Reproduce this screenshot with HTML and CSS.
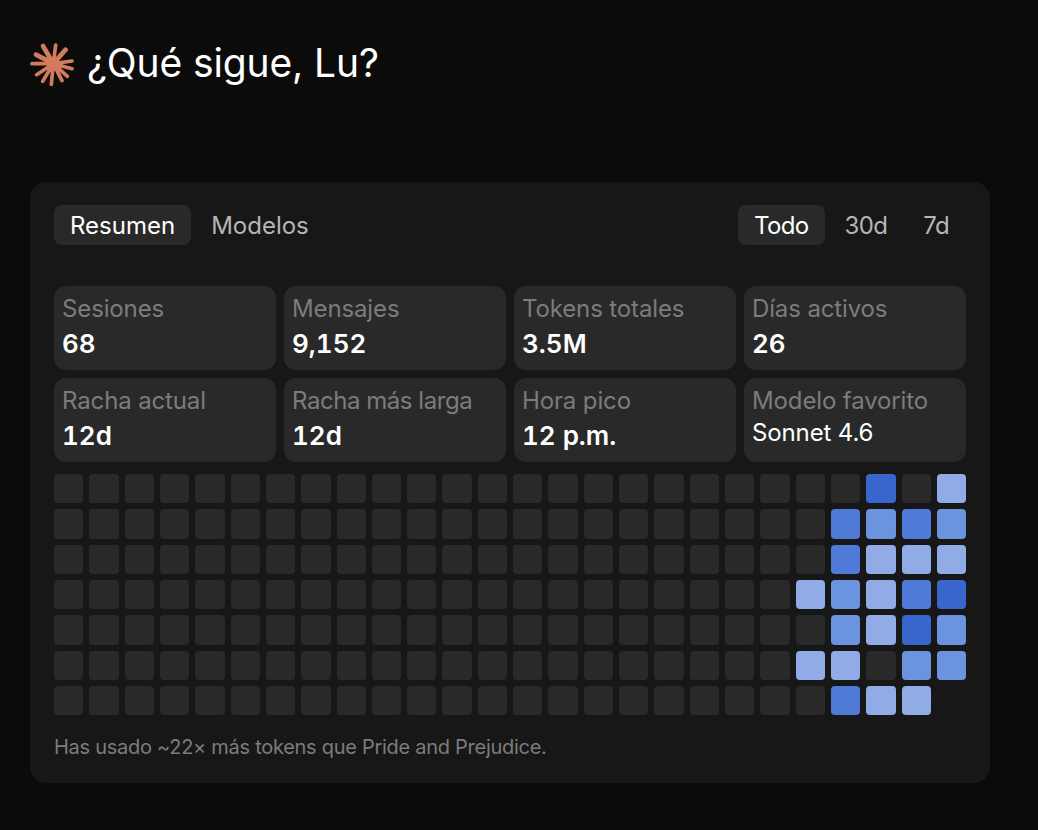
FILE: index.html
```html
<!DOCTYPE html>
<html lang="es">
<head>
    <meta charset="UTF-8">
    <meta name="viewport" content="width=device-width, initial-scale=1.0">
    <title>¿Qué sigue, Lu?</title>
    <link rel="stylesheet" href="styles.css">
</head>
<body>
    <header class="greeting">
        <svg class="logo" viewBox="0 0 132 132" aria-hidden="true">
            <g stroke-width="14">
                <path d="M70 65L39 12M70 65L107 23M70 65L18 38"/>
            </g>
            <g stroke-width="11">
                <path d="M70 65L77 9M70 65L126 57M70 65L126 80M70 65L112 103M70 65L96 116M70 65L64 127M70 65L38 118M70 65L20 98M70 65L6 65"/>
            </g>
            <circle cx="70" cy="65" r="15"/>
        </svg>
        <h1>¿Qué sigue, Lu?</h1>
    </header>

    <main class="card">
        <nav class="toolbar">
            <div class="tabs">
                <button class="tab active">Resumen</button>
                <button class="tab">Modelos</button>
            </div>
            <div class="tabs range">
                <button class="tab active">Todo</button>
                <button class="tab">30d</button>
                <button class="tab">7d</button>
            </div>
        </nav>

        <section class="stats">
            <div class="stat"><span class="label">Sesiones</span><span class="value">68</span></div>
            <div class="stat"><span class="label">Mensajes</span><span class="value">9,152</span></div>
            <div class="stat"><span class="label">Tokens totales</span><span class="value">3.5M</span></div>
            <div class="stat"><span class="label">Días activos</span><span class="value">26</span></div>
            <div class="stat"><span class="label">Racha actual</span><span class="value">12d</span></div>
            <div class="stat"><span class="label long">Racha más larga</span><span class="value">12d</span></div>
            <div class="stat"><span class="label">Hora pico</span><span class="value">12 p.m.</span></div>
            <div class="stat"><span class="label">Modelo favorito</span><span class="value model">Sonnet 4.6</span></div>
        </section>

        <section class="heatmap" id="heatmap"></section>

        <p class="note">Has usado ~22× más tokens que Pride and Prejudice.</p>
    </main>

    <script>
        // últimas semanas de cada fila, nivel de actividad 0-4
        const filas = ["00401", "03232", "03111", "12134", "02142", "11022", "0311"];
        const semanasVacias = 21;
        const heatmap = document.getElementById("heatmap");

        for (const fila of filas) {
            const niveles = "0".repeat(semanasVacias) + fila;
            for (const nivel of niveles) {
                const dia = document.createElement("div");
                dia.className = `day level-${nivel}`;
                heatmap.appendChild(dia);
            }
        }
    </script>
</body>
</html>
```

FILE: styles.css
```css
* {
    box-sizing: border-box;
}

body {
    font-family: Inter, "Open Sans", sans-serif;
    background-color: #0b0b0b;
    color: #fff;
    margin: 0;
    padding: 41px 48px 0 30px;
}

.greeting {
    display: flex;
    align-items: center;
    gap: 13px;
    height: 46px;
    margin-bottom: 95px;
}

.logo {
    width: 44px;
    height: 44px;
    fill: #d27c5d;
    stroke: #d27c5d;
    stroke-linecap: round;
}

.logo circle {
    stroke: none;
}

h1 {
    margin: 0;
    padding-bottom: 2px;
    font-size: 39px;
    font-weight: 400;
    line-height: 44px;
    letter-spacing: -0.12px;
    white-space: nowrap;
}

.card {
    width: 960px;
    height: 601px;
    padding: 23px 24px;
    background-color: #171717;
    border-radius: 16px;
}

.toolbar {
    display: flex;
    justify-content: space-between;
    margin-bottom: 41px;
}

.tabs {
    display: flex;
    gap: 4px;
}

.tab {
    height: 40px;
    padding: 2px 16px 0;
    border: none;
    border-radius: 8px;
    background: none;
    color: #b5b5b5;
    font-family: inherit;
    font-size: 24px;
    line-height: 38px;
    cursor: pointer;
}

.range .tab {
    padding: 2px 16px 0 15.8px;
    letter-spacing: -0.6px;
}

.range .tab:last-child {
    padding-right: 17px;
}

.tab.active {
    background-color: #292929;
    color: #fff;
}

.stats {
    display: grid;
    grid-template-columns: repeat(4, 1fr);
    gap: 8px;
    margin-bottom: 12px;
}

.stat {
    display: flex;
    flex-direction: column;
    align-items: flex-start;
    height: 84px;
    padding: 7px 8px;
    border-radius: 12px;
    background-color: #292929;
    white-space: nowrap;
}

.label {
    color: #7c7c7c;
    font-size: 24px;
    line-height: 32px;
    letter-spacing: -0.13px;
}

.label.long {
    letter-spacing: -0.45px;
}

.value {
    font-size: 26px;
    font-weight: 600;
    font-variant-numeric: tabular-nums;
    line-height: 37px;
}

.value.model {
    font-size: 24px;
    font-weight: 400;
    font-variant-numeric: normal;
    line-height: 32px;
    letter-spacing: -0.13px;
}

.heatmap {
    display: grid;
    grid-template-columns: repeat(26, 1fr);
    gap: 6px;
}

.day {
    aspect-ratio: 1;
    border-radius: 4px;
}

.level-0 {
    background-color: #292929;
}

.level-1 {
    background-color: #90abe6;
}

.level-2 {
    background-color: #6c93de;
}

.level-3 {
    background-color: #4f7ad8;
}

.level-4 {
    background-color: #3866cc;
}

.note {
    margin: 18px 0 0;
    color: #7c7c7c;
    font-size: 20px;
    line-height: 28px;
    letter-spacing: -0.28px;
}
```
